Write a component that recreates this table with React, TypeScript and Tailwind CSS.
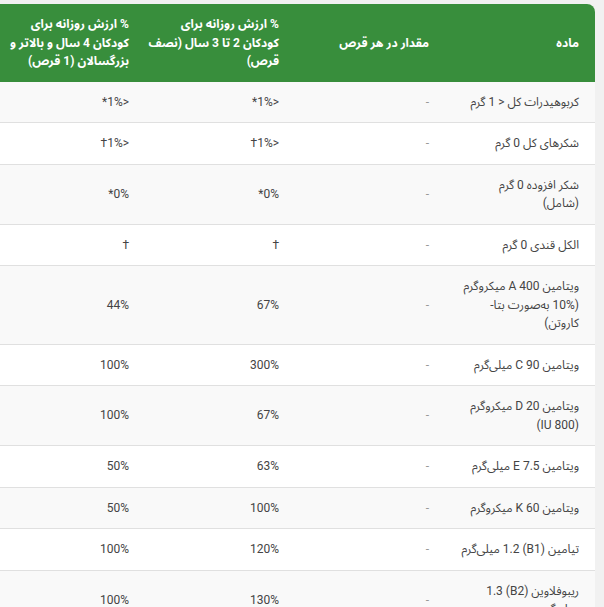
import React from 'react'

type Row = {
  name: React.ReactNode
  amount: string
  kids: string
  adults: string
}

const rows: Row[] = [
  { name: 'کربوهیدرات کل < 1 گرم', amount: '-', kids: '<1%*', adults: '<1%*' },
  { name: 'شکرهای کل 0 گرم', amount: '-', kids: '<1%†', adults: '<1%†' },
  {
    name: (
      <>
        شکر افزوده 0 گرم
        <br />
        (شامل)
      </>
    ),
    amount: '-',
    kids: '0%*',
    adults: '0%*',
  },
  { name: 'الکل قندی 0 گرم', amount: '-', kids: '†', adults: '†' },
  {
    name: (
      <>
        ویتامین A 400 میکروگرم
        <br />
        (10% به‌صورت بتا-
        <br />
        کاروتن)
      </>
    ),
    amount: '-',
    kids: '67%',
    adults: '44%',
  },
  { name: 'ویتامین C 90 میلی‌گرم', amount: '-', kids: '300%', adults: '100%' },
  {
    name: (
      <>
        ویتامین D 20 میکروگرم
        <br />
        (800 IU)
      </>
    ),
    amount: '-',
    kids: '67%',
    adults: '100%',
  },
  { name: 'ویتامین E 7.5 میلی‌گرم', amount: '-', kids: '63%', adults: '50%' },
  { name: 'ویتامین K 60 میکروگرم', amount: '-', kids: '100%', adults: '50%' },
  { name: 'تیامین (B1) 1.2 میلی‌گرم', amount: '-', kids: '120%', adults: '100%' },
  {
    name: (
      <>
        ریبوفلاوین (B2) 1.3
        <br />
        میلی‌گرم
      </>
    ),
    amount: '-',
    kids: '130%',
    adults: '100%',
  },
]

export default function App() {
  return (
    <div
      dir="rtl"
      className="min-h-screen overflow-hidden bg-[#f1f1f1] pt-1 pr-[9px] font-['Roboto','Noto_Sans_Arabic','DejaVu_Sans',sans-serif] text-[12px] leading-[18.5px]"
    >
      <div className="w-[600px] overflow-hidden rounded-tr-lg bg-white">
        <table className="w-[600px] table-fixed border-collapse text-right">
          <colgroup>
            <col className="w-[150px]" />
            <col className="w-[150px]" />
            <col className="w-[150px]" />
            <col className="w-[150px]" />
          </colgroup>
          <thead>
            {/* header lines are broken by hand so the bold text wraps like the original */}
            <tr className="bg-[#388e3c] text-white">
              <th className="whitespace-nowrap px-4 py-[11px] align-middle font-bold">ماده</th>
              <th className="whitespace-nowrap px-4 py-[11px] align-middle font-bold">
                مقدار در هر قرص
              </th>
              <th className="whitespace-nowrap px-4 py-[11px] align-middle font-bold">
                % ارزش روزانه برای
                <br />
                کودکان 2 تا 3 سال (نصف
                <br />
                قرص)
              </th>
              <th className="whitespace-nowrap px-4 py-[11px] align-middle font-bold">
                % ارزش روزانه برای
                <br />
                کودکان 4 سال و بالاتر و
                <br />
                بزرگسالان (1 قرص)
              </th>
            </tr>
          </thead>
          <tbody className="text-[#444]">
            {rows.map((row, i) => (
              <tr
                key={i}
                className={`border-b border-[#e0e0e0] ${i % 2 === 0 ? 'bg-[#f9f9f9]' : 'bg-white'}`}
              >
                <td className="px-4 py-[11px] align-middle">{row.name}</td>
                <td className="px-4 py-[11px] align-middle text-[#999]">{row.amount}</td>
                <td className="px-4 py-[11px] align-middle">{row.kids}</td>
                <td className="px-4 py-[11px] align-middle">{row.adults}</td>
              </tr>
            ))}
          </tbody>
        </table>
      </div>
    </div>
  )
}
